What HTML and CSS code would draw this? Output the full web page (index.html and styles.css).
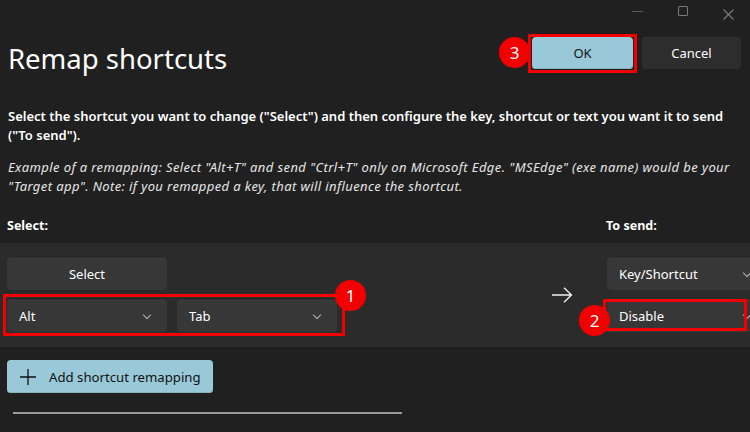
FILE: index.html
```html
<!DOCTYPE html>
<html>
<head>
<meta charset="utf-8"/>
<title>Remap shortcuts</title>
<link rel="stylesheet" href="styles.css">
</head>
<body>

<div class="titlebar">
  <span class="ctl ctl-min"></span>
  <span class="ctl ctl-max"></span>
  <span class="ctl ctl-close">
    <svg width="11" height="11" viewBox="0 0 11 11"><path d="M0.5 0.5L10.5 10.5M10.5 0.5L0.5 10.5" stroke="#7a7a7a" stroke-width="1.1" fill="none"/></svg>
  </span>
</div>

<div class="header">
  <h1 class="title">Remap shortcuts</h1>
  <div class="actions">
    <div class="marked">
      <span class="badge badge-ok">3</span>
      <button class="btn btn-accent btn-ok">OK</button>
    </div>
    <button class="btn btn-cancel">Cancel</button>
  </div>
</div>

<p class="intro">Select the shortcut you want to change ("Select") and then configure the key, shortcut or text you want it to send ("To send").</p>

<p class="example">Example of a remapping: Select "Alt+T" and send "Ctrl+T" only on Microsoft Edge. "MSEdge" (exe name) would be your "Target app". Note: if you remapped a key, that will influence the shortcut.</p>

<div class="labels">
  <span class="label">Select:</span>
  <span class="label label-send">To send:</span>
</div>

<div class="panel">
  <div class="col-select">
    <button class="btn btn-select">Select</button>
    <div class="keys">
      <span class="badge badge-keys">1</span>
      <div class="dropdown">Alt<span class="chev"></span></div>
      <div class="dropdown">Tab<span class="chev"></span></div>
    </div>
  </div>
  <div class="col-arrow">
    <svg width="22" height="16" viewBox="0 0 22 16"><path d="M1 8H20.5M13 0.8L20.5 8L13 15.2" stroke="#f2f2f2" stroke-width="1.3" fill="none"/></svg>
  </div>
  <div class="col-send">
    <div class="dropdown">Key/Shortcut<span class="chev"></span></div>
    <div class="dropdown">
      Disable<span class="chev"></span>
      <span class="box-disable"></span>
      <span class="badge badge-disable">2</span>
    </div>
  </div>
</div>

<div class="footer">
  <button class="btn btn-accent btn-add">
    <svg width="18" height="18" viewBox="0 0 18 18"><path d="M9 1V17M1 9H17" stroke="#111" stroke-width="1.3" fill="none"/></svg>
    Add shortcut remapping
  </button>
  <div class="sep"></div>
</div>

</body>
</html>
```

FILE: styles.css
```css
html, body {
   margin: 0;
   padding: 0;
   background-color: #202020;
   color: #ffffff;
   font-family: 'Noto Sans', 'Open Sans', sans-serif;
   font-size: 13px;
   overflow: hidden;
   width: 750px;
   height: 432px;
}

button {
   font-family: inherit;
   font-size: 13px;
   border: none;
   cursor: pointer;
}

.titlebar {
   display: flex;
   justify-content: flex-end;
   align-items: center;
   height: 22px;
   padding-right: 16px;
   gap: 35px;
}

.ctl {
   display: block;
   width: 11px;
   height: 11px;
}

.ctl-min {
   border-bottom: 1px solid #5a5a5a;
   height: 6px;
   margin-bottom: 5px;
}

.ctl-max {
   box-sizing: border-box;
   width: 10px;
   height: 10px;
   border: 1px solid #7a7a7a;
   border-radius: 1px;
}

.header {
   display: flex;
   justify-content: space-between;
   align-items: center;
   padding: 0 9px 0 8px;
   height: 63px;
   margin-top: 3px;
}

.title {
   margin: 0;
   font-size: 27.5px;
   font-weight: 400;
   padding-top: 3px;
}

.actions {
   display: flex;
   gap: 9px;
   align-items: center;
   margin-top: -8px;
}

.btn {
   height: 32px;
   border-radius: 4px;
   color: #ffffff;
   background-color: #373737;
   box-shadow: inset 0 1px 0 #3e3e3e;
}

.btn-accent {
   background-color: #99c9d9;
   color: #111111;
   box-shadow: inset 0 -1px 0 #86b2c1;
}

.marked {
   position: relative;
}

.marked::after {
   content: "";
   position: absolute;
   left: -4px;
   top: -3px;
   right: -4px;
   bottom: -4px;
   border: 3px solid #f20000;
}

.btn-ok {
   display: block;
   width: 101px;
}

.btn-cancel {
   width: 99px;
   background-color: #2d2d2d;
   box-shadow: inset 0 1px 0 #333;
}

.badge {
   position: absolute;
   width: 31px;
   height: 31px;
   border-radius: 50%;
   background-color: #f20000;
   color: #ffffff;
   font-size: 17px;
   line-height: 31px;
   text-align: center;
   z-index: 2;
}

.badge-ok {
   left: -33px;
   top: 0px;
}

.intro {
   margin: 19px 8px 0 8px;
   font-weight: 600;
   font-size: 13px;
   line-height: 19px;
}

.example {
   margin: 13px 8px 0 8px;
   font-style: italic;
   font-size: 13px;
   letter-spacing: 0.4px;
   line-height: 19px;
   color: #e6e6e6;
}

.labels {
   display: flex;
   margin-top: 21px;
   padding: 0 8px 0 7px;
   height: 26px;
   font-weight: 700;
   font-size: 12.5px;
}

.label-send {
   margin-left: auto;
   width: 136px;
}

.panel {
   display: flex;
   background-color: #2b2b2b;
   height: 104px;
   padding: 15px 0 0 7px;
   box-sizing: border-box;
}

.col-select {
   display: flex;
   flex-direction: column;
   gap: 10px;
   width: 340px;
   flex-shrink: 0;
}

.btn-select {
   width: 160px;
}

.keys {
   position: relative;
   display: flex;
   gap: 10px;
   margin: -6px 0 0 -4px;
   padding: 3px 5px 1px 1px;
   border: 3px solid #f20000;
   width: fit-content;
}

.dropdown {
   position: relative;
   display: flex;
   align-items: center;
   box-sizing: border-box;
   width: 160px;
   height: 32px;
   padding-left: 12px;
   border-radius: 4px;
   background-color: #373737;
   box-shadow: inset 0 1px 0 #3e3e3e;
   font-size: 13px;
   flex-shrink: 0;
}

.chev {
   position: absolute;
   right: 17px;
   top: 12px;
   width: 5px;
   height: 5px;
   border-right: 1px solid #b5b5b5;
   border-bottom: 1px solid #b5b5b5;
   transform: rotate(45deg);
}

.badge-keys {
   right: -24px;
   top: -17px;
}

.col-arrow {
   display: flex;
   justify-content: flex-end;
   width: 260px;
   flex-shrink: 0;
   padding-top: 29px;
   padding-right: 34px;
   box-sizing: border-box;
}

.col-send {
   display: flex;
   flex-direction: column;
   gap: 10px;
   flex-shrink: 0;
}

.box-disable {
   position: absolute;
   left: -4px;
   top: -1px;
   width: 144px;
   height: 32px;
   box-sizing: border-box;
   border: 3px solid #f20000;
}

.badge-disable {
   left: -28px;
   top: 5px;
}

.footer {
   padding: 13px 0 0 7px;
}

.btn-add {
   display: flex;
   align-items: center;
   gap: 12px;
   width: 206px;
   height: 33px;
   padding-left: 12px;
   font-size: 13.2px;
}

.sep {
   width: 389px;
   height: 2px;
   margin: 19px 0 0 6px;
   background-color: #9a9a9a;
}
```
